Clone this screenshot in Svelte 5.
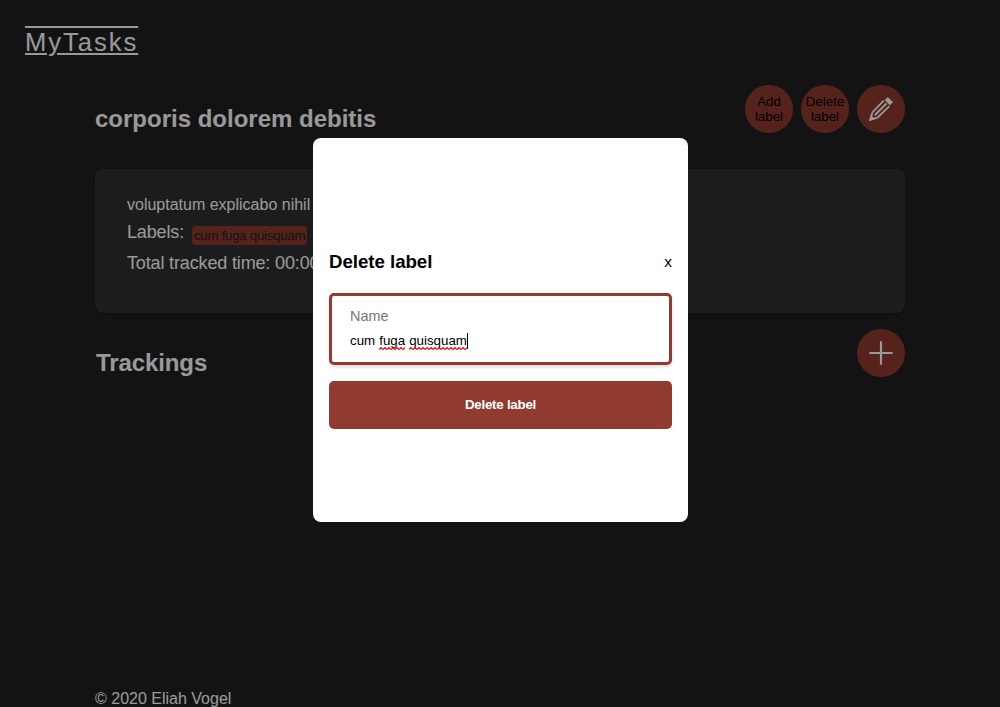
<script>
  let name = $state('cum fuga quisquam');
  const tags = ['cum fuga quisquam'];
</script>

<div class="page">
  <header><a class="brand" href="#home">MyTasks</a></header>
  <main>
    <div class="title-row">
      <h1>corporis dolorem debitis</h1>
      <div class="actions">
        <button class="round">Add label</button>
        <button class="round">Delete label</button>
        <button class="round" aria-label="Edit">
          <svg width="24" height="24" viewBox="0 0 24 24" fill="none" stroke="#fff" stroke-width="1.8">
            <path d="M14.800 3.700 3.500 15.100 1.300 22.700l7.500-2.200L20.300 9.200" />
            <path d="M5.800 18.200 17.600 6.400" stroke-width="2" />
            <path d="M1.300 22.700l.9-3.200 2.300 2.300z" fill="#fff" />
            <path d="m15.700 3.100 2.600-2.600q.5-.5 1 0l4.200 4.200q.5.5 0 1l-2.600 2.600z" fill="#fff" stroke="none" />
          </svg>
        </button>
      </div>
    </div>
    <section class="card">
      <p class="desc">voluptatum explicabo nihil</p>
      <div class="labels"><span>Labels:</span>{#each tags as tag}<span class="tag">{tag}</span>{/each}</div>
      <p class="time">Total tracked time: 00:00</p>
    </section>
    <div class="track-row">
      <h2>Trackings</h2>
      <button class="round" aria-label="Add tracking">
        <svg width="24" height="24" viewBox="0 0 24 24"><path d="M12 1.200v21.600M1.200 12h21.600" stroke="#fff" stroke-width="2.200" stroke-linecap="round" /></svg>
      </button>
    </div>
  </main>
  <footer>© 2020 Eliah Vogel</footer>
</div>

<div class="overlay">
  <div class="modal" role="dialog" aria-modal="true">
    <div class="modal-head"><h3>Delete label</h3><button class="close">x</button></div>
    <div class="field">
      <span class="caption">Name</span>
      <div class="value">{#each name.split(' ') as word, i}<span class:miss={i > 0}>{word}{#if i > 0}<svg class="wave" width="100%" height="3"><defs><pattern id="wave{i}" width="4" height="3" patternUnits="userSpaceOnUse"><path d="M0 2.500 2 .500 4 2.500" fill="none" stroke="#f00000" stroke-width="1.100" /></pattern></defs><rect width="100%" height="3" fill="url(#wave{i})" /></svg>{/if}</span>{/each}<i class="caret"></i></div>
    </div>
    <button class="submit">Delete label</button>
  </div>
</div>

<style>
  :global(body) { margin: 0; background: #212121; overflow: hidden; }
  .page, .overlay, button { font-family: "Liberation Sans", Arial, sans-serif; }
  .page { height: 707px; box-sizing: border-box; display: flex; flex-direction: column; color: #fff; background: #212121; overflow: hidden; }
  h1, h2, h3, p { margin: 0; }
  button { border: 0; padding: 0; }
  header { height: 85px; box-sizing: border-box; padding: 26px 25px 0; }
  .brand { display: inline-block; color: #fff; font-size: 25.600px; line-height: 32px; letter-spacing: 1.950px; text-decoration: underline overline; text-decoration-thickness: 2px; text-underline-offset: 2px; }
  main { flex: 1; padding: 0 95px; }
  .title-row { display: flex; justify-content: space-between; height: 84px; }
  h1 { font-size: 24px; line-height: 28px; padding-top: 20px; }
  .actions { display: flex; gap: 8px; }
  .round { width: 48px; height: 48px; border-radius: 50%; background: #903a30; color: #000; font-size: 13.333px; line-height: 15px; display: flex; align-items: center; justify-content: center; text-align: center; }
  .card { height: 144px; box-sizing: border-box; border-radius: 8px; background: #2f2f2f; padding: 27px 32px; box-shadow: 0 2px 5px rgba(0, 0, 0, .3); }
  .desc { font-size: 16px; line-height: 18px; }
  .labels { display: flex; align-items: flex-start; gap: 8px; height: 30px; padding-top: 8px; box-sizing: border-box; font-size: 18px; line-height: 20px; letter-spacing: -.15px; }
  .tag { margin-top: 4px; height: 19px; line-height: 20px; padding: 0 2px; border-radius: 4px; background: #903a30; color: #212121; font-size: 13.333px; letter-spacing: -.3px; }
  .time { font-size: 18px; line-height: 20px; padding-top: 9px; letter-spacing: -.150px; }
  .track-row { display: flex; justify-content: space-between; padding-top: 16px; }
  h2 { font-size: 24px; line-height: 28px; padding: 20px 0 0 1px; letter-spacing: -.1px; }
  footer { height: 17px; padding-left: 95px; font-size: 16px; line-height: 18px; }
  .overlay { position: fixed; inset: 0; display: flex; justify-content: center; align-items: flex-start; padding-top: 138px; background: rgba(0, 0, 0, .4); color: #000; }
  .modal { width: 375px; height: 384px; margin-left: 1px; box-sizing: border-box; padding: 18px 16px 0; border-radius: 8px; background: #fff; display: flex; flex-direction: column; justify-content: center; }
  .modal-head { display: flex; justify-content: space-between; align-items: center; height: 22px; margin-bottom: 21px; }
  h3 { font-size: 18.720px; line-height: 22px; padding-top: 2px; letter-spacing: -.05px; }
  .close { background: none; color: #000; font-size: 15.500px; line-height: 18px; padding-top: 2px; }
  .field { height: 72px; box-sizing: border-box; border: 3px solid #903a30; border-radius: 5px; padding: 12px 18px; box-shadow: 0 2px 3px rgba(0, 0, 0, .15); }
  .caption { display: block; color: #757575; font-size: 14.400px; line-height: 17px; }
  .value { display: flex; gap: 4px; font-size: 13.333px; line-height: 16px; margin-top: 8px; }
  .miss { position: relative; }
  .wave { position: absolute; left: 0; bottom: -1px; }
  .caret { width: 1px; height: 16px; margin-left: -4px; background: #000; }
  .submit { height: 48px; flex: none; margin-top: 16px; border-radius: 5px; background: #903a30; color: #fff; font-size: 13.333px; font-weight: 700; letter-spacing: -.25px; }
</style>
